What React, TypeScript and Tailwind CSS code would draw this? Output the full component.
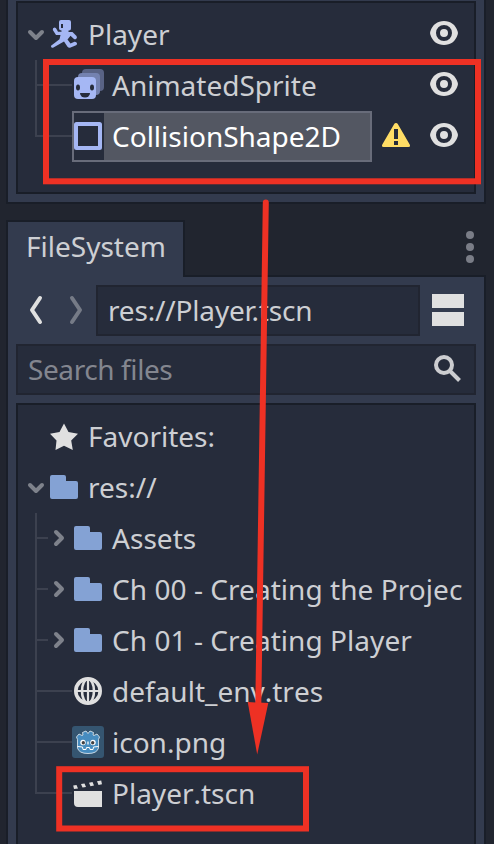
import React from "react";

type Kids = { children?: React.ReactNode };

function Icon({ children }: Kids) {
  return (
    <svg className="mb-px block h-8 w-8 shrink-0" viewBox="0 0 32 32">
      {children}
    </svg>
  );
}

const Eye = () => (
  <svg className="mb-[3px] ml-auto block h-8 w-8 shrink-0" viewBox="0 0 32 32">
    <path
      fill="#e0e0e0"
      fillRule="evenodd"
      d="M16 4C9.500 4 4.500 7.500 2.300 14.500Q1.800 16 2.300 17.500C4.500 24.500 9.500 28 16 28S27.500 24.500 29.700 17.500Q30.200 16 29.700 14.500C27.500 7.500 22.500 4 16 4ZM16 8A8 8 0 1 1 16 24A8 8 0 1 1 16 8ZM16 12A4 4 0 1 0 16 20A4 4 0 1 0 16 12Z"
    />
  </svg>
);

const Warning = () => (
  <Icon>
    <path
      fill="#ffdd65"
      fillRule="evenodd"
      d="M16 3Q17.200 3 17.800 4L29.700 24.500Q30.700 27 28.500 27H3.500Q1.300 27 2.300 24.500L14.200 4Q14.800 3 16 3ZM14 9V19H18V9ZM14 21V25H18V21Z"
    />
  </Icon>
);

const Runner = () => (
  <Icon>
    <path
      fill="#a5b7f4"
      fillRule="evenodd"
      d="M13 2H21Q23 2 23 4V10.500Q23 12.500 21 12.500H20.500V14H24.500L28.500 18Q29.500 19.500 28.300 20.800Q27 21.800 25.700 20.800L22.500 17.700L19.500 21.500L22.500 25.500L26.500 23.700Q28.500 23.500 29 25.300Q29.200 26.700 28 27.300L22 29.700Q20.500 30 19.500 28.700L16 23.500L5 29.700Q3.500 30.300 3 28.500L3 27.800L11.500 21.300L12.500 17H8L4.800 12Q4.500 9.500 6.500 9.500Q8 9.500 8.500 11L10 13.700H13.500V12.500Q11 12.500 11 10.500V4Q11 2 13 2ZM13 6V10H15V6Z"
    />
  </Icon>
);

const Sprite = () => (
  <Icon>
    <rect x="10" y="0" width="22" height="22" rx="4" fill="#596385" />
    <rect x="6" y="4" width="22" height="22" rx="4" fill="#7482b0" />
    <rect x="2" y="8" width="22" height="22" rx="4" fill="#a5b7f4" />
    <g fill="#262c3b">
      <ellipse cx="6" cy="18.500" rx="2" ry="3" />
      <ellipse cx="20" cy="18.500" rx="2" ry="3" />
      <path d="M8 24H18A5 4.500 0 0 1 8 24Z" />
    </g>
  </Icon>
);

const Square = () => (
  <Icon>
    <rect x="4" y="4" width="24" height="24" rx="0.500" fill="none" stroke="#a5b7f4" strokeWidth="4" strokeLinejoin="round" />
  </Icon>
);

const Star = () => (
  <Icon>
    <path
      fill="#e0e0e0"
      d="M16 3.500L20.500 12L30 13.700L23.200 20.500L24.800 30L16 25.700L7.500 30L8.500 20.500L2 13.700L11.500 12Z"
    />
  </Icon>
);

const Folder = () => (
  <Icon>
    <path fill="#84a2d4" d="M4 4H16Q18 4 18 6V10H28Q30 10 30 12V26Q30 28 28 28H4Q2 28 2 26V6Q2 4 4 4Z" />
  </Icon>
);

const Globe = () => (
  <Icon>
    <g fill="none" stroke="#e0e0e0">
      <circle cx="16" cy="16" r="12.200" strokeWidth="3.600" />
      <ellipse cx="16" cy="16" rx="6" ry="12" strokeWidth="2.600" />
      <path d="M3 16H29M16 4V28" strokeWidth="2.200" />
    </g>
  </Icon>
);

const Godot = () => (
  <Icon>
    <rect width="32" height="32" rx="3" fill="#355570" />
    <path
      d="M4.500 11L7 8L10 9.500L11 9L10.500 6.500L14 5L16 7.500L18 5L21.500 6.500L21 9L22 9.500L25 8L27.500 11L26.500 13.500V22Q25 27.500 16 27.500T5.500 22V13.500Z"
      fill="#478cbf"
      stroke="#e8f0f5"
      strokeWidth="0.800"
      strokeLinejoin="round"
    />
    <path d="M5.500 20.500L10.500 21L11 23.500H14L14.500 21.500H17.500L18 23.500H21L21.500 21L26.500 20.500" fill="none" stroke="#fff" strokeWidth="1" />
    <circle cx="11" cy="16.500" r="2.700" fill="#fff" />
    <circle cx="21" cy="16.500" r="2.700" fill="#fff" />
    <circle cx="11.300" cy="16.700" r="1.700" fill="#414042" />
    <circle cx="20.700" cy="16.700" r="1.700" fill="#414042" />
    <path d="M16 15.500V18.500" stroke="#fff" strokeWidth="1.300" />
  </Icon>
);

const Clapper = () => (
  <Icon>
    <path
      fill="#e0e0e0"
      d="M2 14H30V30H6Q2 30 2 26ZM1.200 8.500L4.500 7.900L6 11.400L2 12.100ZM9 7.100L12.500 6.500L14 10L10.500 10.600ZM17 5.700L20.500 5.100L22 8.600L18.500 9.200ZM25 4.300L29.200 3.600L30 7.300L26.500 7.900Z"
    />
  </Icon>
);

function Arrow({ open }: { open?: boolean }) {
  return (
    <svg className="block h-[51px] w-6 shrink-0" viewBox="0 0 24 51">
      <path
        d={open ? "M6 23L12 29L18 23" : "M8 19L14 25L8 31"}
        fill="none"
        stroke="#7e828b"
        strokeWidth="4"
        strokeLinecap="round"
        strokeLinejoin="round"
      />
    </svg>
  );
}

function Branch({ last, short }: { last?: boolean; short?: boolean }) {
  return (
    <div className={`ml-[17px] flex h-full shrink-0 flex-col ${short ? "w-[13px]" : "w-[37px]"}`}>
      <div className="h-[26px] border-b-2 border-l-2 border-[#3c414f]" />
      {!last && <div className="grow border-l-2 border-[#3c414f]" />}
    </div>
  );
}

function Row({ children }: Kids) {
  return <div className="flex h-[51px] items-center whitespace-nowrap">{children}</div>;
}

function Label({ children }: Kids) {
  return <span className="ml-2 leading-[51px]">{children}</span>;
}

function FileLabel({ children }: Kids) {
  return <span className="ml-2 leading-[51px] [font-kerning:none]">{children}</span>;
}

function FolderRow({ name }: { name: string }) {
  return (
    <Row>
      <Branch short />
      <Arrow />
      <Folder />
      <span className="ml-2 leading-[51px] tracking-[0.05px]">{name}</span>
    </Row>
  );
}

export default function App() {
  return (
    <div className="relative flex h-[844px] w-[494px] flex-col overflow-hidden bg-[#21252f] pl-1.5 pr-2 font-['Noto_Sans',sans-serif] text-[28px] text-[#cdcfd3]">
      <section className="h-[204px] shrink-0 border-x-2 border-b-2 border-[#191e28] bg-[#333b4e] px-2 pb-2 pt-px">
        <div className="h-[193px] border-2 border-[#191e28] bg-[#262c3b] pr-[14px] pt-1.5">
          <Row>
            <div className="w-1.5" />
            <Arrow open />
            <Runner />
            <Label>Player</Label>
            <Eye />
          </Row>
          <Row>
            <Branch />
            <Sprite />
            <Label>AnimatedSprite</Label>
            <Eye />
          </Row>
          <Row>
            <Branch last />
            <div className="flex h-[51px] w-[300px] items-center border-2 border-[#686c7a] bg-[#535762] text-white">
              <div className="flex h-full w-[30px] items-center overflow-hidden bg-[#262c3b]">
                <div className="-ml-0.5"><Square /></div>
              </div>
              <span className="ml-2 leading-[47px]">CollisionShape2D</span>
            </div>
            <div className="ml-2"><Warning /></div>
            <Eye />
          </Row>
        </div>
      </section>

      <div className="mt-4 flex h-[57px] shrink-0">
        <div className="h-[57px] w-[179px] border-x-2 border-t-2 border-[#191e28] bg-[#333b4e] pl-[18px] leading-[49px]">
          FileSystem
        </div>
        <div className="flex grow justify-end border-b-2 border-[#191e28] pr-3">
          <svg className="h-[55px] w-2" viewBox="0 0 8 55" fill="#7a7d87">
            <circle cx="4" cy="15" r="4" />
            <circle cx="4" cy="27" r="4" />
            <circle cx="4" cy="39" r="4" />
          </svg>
        </div>
      </div>

      <section className="flex grow flex-col border-x-2 border-[#191e28] bg-[#333b4e] px-2 pt-2">
        <div className="flex h-[51px] shrink-0 items-center">
          <svg className="h-[51px] w-20 shrink-0" viewBox="0 0 80 51" fill="none" strokeWidth="4" strokeLinecap="round" strokeLinejoin="round">
            <path d="M24 13L16 25L24 37" stroke="#e0e0e0" />
            <path d="M56 13L64 25L56 37" stroke="#767b87" />
          </svg>
          <div className="h-[51px] w-[324px] border-2 border-[#212531] bg-[#262c3b] pl-2.5 leading-[47px] tracking-[-0.17px]">
            res://Player.tscn
          </div>
          <div className="mb-px ml-3 flex flex-col gap-1">
            <div className="h-3.5 w-8 bg-[#e0e0e0]" />
            <div className="h-3.5 w-8 bg-[#e0e0e0]" />
          </div>
        </div>
        <div className="mt-2 flex h-[51px] shrink-0 items-center justify-between border-2 border-[#212531] bg-[#262c3b] pl-2.5 pr-[10px] leading-[47px] tracking-[-0.4px] text-[#83868f]">
          Search files
          <svg className="mb-px h-8 w-8" viewBox="0 0 32 32" fill="none" stroke="#cccdd0" strokeWidth="4">
            <circle cx="12" cy="12" r="8" />
            <path d="M18 18L27.500 27.500" />
          </svg>
        </div>
        <div className="mt-2 grow border-x-2 border-t-2 border-[#191e28] bg-[#262c3b] pt-1.5">
          <Row>
            <div className="w-[30px]" />
            <Star />
            <Label>Favorites:</Label>
          </Row>
          <Row>
            <div className="w-1.5" />
            <Arrow open />
            <Folder />
            <Label>res://</Label>
          </Row>
          <FolderRow name="Assets" />
          <FolderRow name="Ch 00 - Creating the Projec" />
          <FolderRow name="Ch 01 - Creating Player" />
          <Row>
            <Branch />
            <Globe />
            <FileLabel>default_env.tres</FileLabel>
          </Row>
          <Row>
            <Branch />
            <Godot />
            <Label>icon.png</Label>
          </Row>
          <Row>
            <Branch last />
            <Clapper />
            <FileLabel>Player.tscn</FileLabel>
          </Row>
        </div>
      </section>

      <svg className="pointer-events-none absolute inset-0 h-[844px] w-[494px]" viewBox="0 0 494 844" fill="none" stroke="#ee3124" strokeWidth="6">
        <rect x="46" y="62" width="432" height="119.300" />
        <rect x="59.200" y="769.200" width="246.800" height="59.300" />
        <path d="M265.800 202.500L258.300 705" strokeLinecap="round" />
        <path d="M247.700 702L268.300 703L257.200 754.500Z" fill="#ee3124" stroke="none" />
      </svg>
    </div>
  );
}
